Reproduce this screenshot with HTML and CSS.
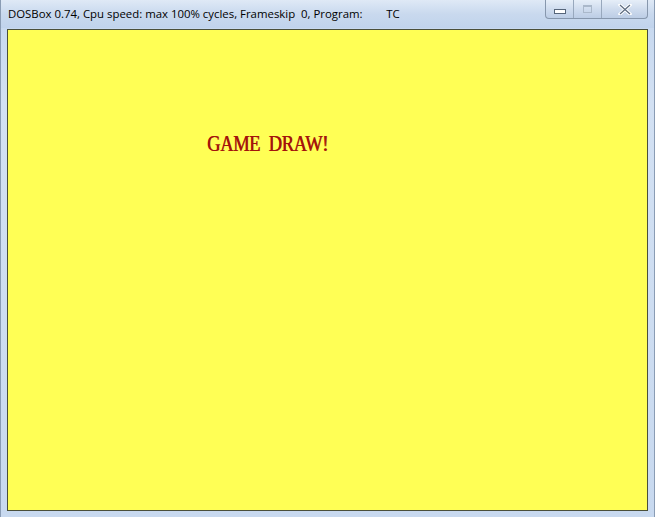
FILE: index.html
```html
<!DOCTYPE html>
<html>
<head>
<meta charset="utf-8">
<link rel="stylesheet" href="styles.css">
</head>
<body>
<div class="window">
  <div class="titlebar">
    <span class="title">DOSBox 0.74, Cpu speed: max 100% cycles, Frameskip&nbsp; 0, Program:&nbsp;&nbsp;&nbsp;&nbsp;&nbsp;&nbsp;&nbsp; TC</span>
    <div class="controls">
      <div class="btn min"><span class="min-bar"></span></div>
      <div class="btn max"><span class="max-box"></span></div>
      <div class="btn close">
        <svg width="14" height="11" viewBox="0 0 14 11"><path d="M2 1 L12 10 M12 1 L2 10" stroke="#fff" stroke-width="3.2" stroke-linecap="square"/><path d="M2 1 L12 10 M12 1 L2 10" stroke="#5d6c80" stroke-width="1.2"/></svg>
      </div>
    </div>
  </div>
  <div class="client">
    <div class="message">GAME&nbsp; DRAW!</div>
  </div>
</div>
</body>
</html>
```

FILE: styles.css
```css
html, body {
  margin: 0;
  padding: 0;
  background: #c9daf0;
}
.window {
  width: 655px;
  height: 517px;
  display: flex;
  flex-direction: column;
  background: linear-gradient(to bottom, #c4d6ee 0%, #d3e1f3 20%, #c8d9ef 100%);
  box-sizing: border-box;
  border-left: 1px solid #8a9cb4;
  border-right: 1px solid #8a9cb4;
}
.titlebar {
  height: 28px;
  flex: none;
  display: flex;
  align-items: flex-start;
  padding-left: 7px;
  position: relative;
  background: linear-gradient(to bottom, #dfe9f6 0%, #c9d9ee 50%, #c0d3ec 100%);
}
.title {
  font-family: "Open Sans", "DejaVu Sans", sans-serif;
  font-size: 11.4px;
  color: #000;
  margin-top: 6px;
  white-space: pre;
}
.controls {
  position: absolute;
  top: 0;
  right: 6px;
  display: flex;
  height: 18px;
  border: 1px solid #8797ad;
  border-top: none;
  border-radius: 0 0 4px 4px;
  overflow: hidden;
  background: linear-gradient(to bottom, #e6eef8 0%, #cfdcee 50%, #bccde5 100%);
}
.btn {
  display: flex;
  align-items: center;
  justify-content: center;
}
.btn.min { width: 27px; border-right: 1px solid #98a8bd; }
.btn.max { width: 27px; border-right: 1px solid #98a8bd; }
.btn.close { width: 45px; }
.min-bar {
  width: 10px;
  height: 3px;
  background: #fff;
  border: 1px solid #56657a;
  margin-top: 5px;
}
.max-box {
  width: 7px;
  height: 5px;
  border: 1px solid #aab8ca;
  border-top-width: 2px;
  background: transparent;
}
.client {
  flex: none;
  height: 480px;
  margin: 1px 6px 0 6px;
  border: 1px solid #4a4f3a;
  background: #ffff55;
  position: relative;
}
.message {
  font-family: "Liberation Serif", "Times New Roman", serif;
  font-size: 21px;
  color: #a4140c;
  margin-left: 199px;
  margin-top: 100px;
  letter-spacing: -0.4px;
  text-shadow: 0.6px 0 0 #a4140c;
  transform: scale(0.88, 1.08);
  transform-origin: top left;
}
```
